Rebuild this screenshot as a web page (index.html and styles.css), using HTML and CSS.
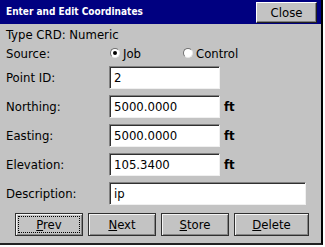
FILE: index.html
```html
<!DOCTYPE html>
<html>
<head>
<meta charset="utf-8">
<link rel="stylesheet" href="styles.css">
</head>
<body>
<div class="window">
  <div class="titlebar">
    <span class="title">Enter and Edit Coordinates</span>
    <button class="close">Close</button>
  </div>
  <div class="content">
    <div class="info">Type CRD: Numeric</div>
    <div class="source-row">
      <span class="label">Source:</span>
      <span class="radio-item first"><span class="radio checked"></span>Job</span>
      <span class="radio-item"><span class="radio"></span>Control</span>
    </div>
    <div class="fields">
      <div class="row"><span class="label">Point ID:</span><span class="input">2</span></div>
      <div class="row"><span class="label">Northing:</span><span class="input">5000.0000</span><span class="unit">ft</span></div>
      <div class="row"><span class="label">Easting:</span><span class="input">5000.0000</span><span class="unit">ft</span></div>
      <div class="row"><span class="label">Elevation:</span><span class="input">105.3400</span><span class="unit">ft</span></div>
      <div class="row"><span class="label">Description:</span><span class="input wide">ip</span></div>
    </div>
    <div class="buttons">
      <button class="btn focus"><u>P</u>rev</button>
      <button class="btn"><u>N</u>ext</button>
      <button class="btn"><u>S</u>tore</button>
      <button class="btn del"><u>D</u>elete</button>
    </div>
  </div>
</div>
</body>
</html>
```
FILE: styles.css
```css
html, body {
  margin: 0;
  padding: 0;
  background: #ffffff;
}
body {
  font-family: "DejaVu Sans Condensed", "DejaVu Sans", sans-serif;
  font-stretch: condensed;
  font-size: 13px;
  color: #000;
}
.window {
  width: 321px;
  height: 243px;
  background: #c3c3c3;
  border-right: 2px solid #000;
  border-bottom: 2px solid #222;
  box-sizing: content-box;
  display: flex;
  flex-direction: column;
}
.titlebar {
  height: 24px;
  background: #000080;
  display: flex;
  align-items: flex-start;
  padding-left: 6px;
}
.title {
  color: #fff;
  font-weight: bold;
  font-size: 10px;
  line-height: 24px;
}
.close {
  margin-left: auto;
  margin-right: 4px;
  margin-top: 2px;
  width: 61px;
  height: 21px;
  padding: 0;
  background: #c3c3c3;
  font-family: inherit;
  font-stretch: condensed;
  font-size: 13px;
  color: #000;
  border: 1px solid;
  border-color: #ffffff #202020 #202020 #ffffff;
  box-shadow: inset -1px -1px #808080;
}
.content {
  padding-left: 6px;
  padding-top: 2px;
}
.info {
  line-height: 18px;
}
.source-row {
  display: flex;
  align-items: center;
  height: 18px;
}
.label {
  width: 103px;
  flex: none;
}
.radio-item {
  display: flex;
  align-items: center;
}
.radio-item.first {
  width: 73px;
}
.radio {
  width: 10px;
  height: 10px;
  box-sizing: border-box;
  border-radius: 50%;
  background: #fff;
  border: 1px solid;
  border-color: #707070 #e8e8e8 #e8e8e8 #707070;
  margin-left: 1px;
  margin-right: 3px;
  position: relative;
}
.radio.checked::after {
  content: "";
  position: absolute;
  left: 2px;
  top: 2px;
  width: 4px;
  height: 4px;
  border-radius: 50%;
  background: #000;
}
.fields {
  margin-top: 4px;
  display: flex;
  flex-direction: column;
  gap: 6px;
}
.row {
  display: flex;
  align-items: center;
  height: 23px;
}
.input {
  width: 111px;
  height: 23px;
  box-sizing: border-box;
  background: #fff;
  border: 1px solid;
  border-color: #808080 #f0f0f0 #f0f0f0 #808080;
  box-shadow: inset 1px 1px #303030;
  padding-left: 4px;
  line-height: 21px;
}
.input.wide {
  width: 197px;
}
.unit {
  margin-left: 4px;
  font-weight: bold;
}
.buttons {
  display: flex;
  margin-top: 8px;
  padding-left: 9px;
  gap: 4px;
}
.btn {
  width: 68px;
  height: 23px;
  padding: 0;
  background: #c3c3c3;
  font-family: inherit;
  font-stretch: condensed;
  font-size: 13px;
  color: #000;
  border: 1px solid #303030;
  box-shadow: inset 1px 1px #f4f4f4, inset -1px -1px #858585;
}
.btn + .btn {
  margin-left: 1px;
}
.btn.del {
  width: 75px;
}
.btn.focus {
  outline: 1px dotted #000;
  outline-offset: -4px;
}
```
